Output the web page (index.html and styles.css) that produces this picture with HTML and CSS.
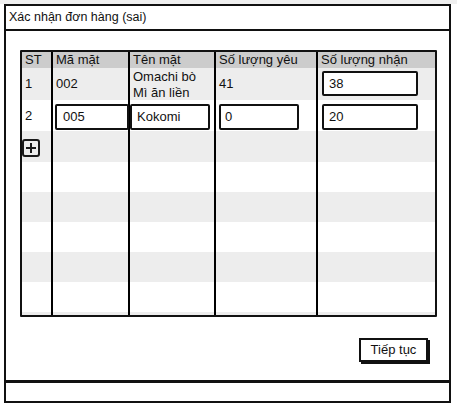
FILE: index.html
```html
<!DOCTYPE html>
<html lang="vi">
<head>
<meta charset="utf-8">
<title>Xác nhận đơn hàng (sai)</title>
<link rel="stylesheet" href="styles.css">
</head>
<body>
<div class="topstrip"></div>
<div class="window">
  <div class="titlebar">Xác nhận đơn hàng (sai)</div>
  <div class="content">
    <div class="table">
      <div class="row head">
        <div class="cell">ST</div>
        <div class="cell">Mã mặt</div>
        <div class="cell">Tên mặt</div>
        <div class="cell">Số lượng yêu</div>
        <div class="cell">Số lượng nhận</div>
      </div>
      <div class="row alt r1">
        <div class="cell mid">1</div>
        <div class="cell mid">002</div>
        <div class="cell"><div class="multi">Omachi bò<br>Mì ăn liền<br>Hảo hảo</div></div>
        <div class="cell mid">41</div>
        <div class="cell"><div class="input in-r1 in-wide">38</div></div>
      </div>
      <div class="row r2">
        <div class="cell mid">2</div>
        <div class="cell"><div class="input in-code">005</div></div>
        <div class="cell"><div class="input in-name">Kokomi</div></div>
        <div class="cell"><div class="input in-qty">0</div></div>
        <div class="cell"><div class="input in-wide">20</div></div>
      </div>
      <div class="row alt r3">
        <div class="cell"><span class="plus"></span></div>
        <div class="cell"></div><div class="cell"></div><div class="cell"></div><div class="cell"></div>
      </div>
      <div class="row r4">
        <div class="cell"></div><div class="cell"></div><div class="cell"></div><div class="cell"></div><div class="cell"></div>
      </div>
      <div class="row alt r4">
        <div class="cell"></div><div class="cell"></div><div class="cell"></div><div class="cell"></div><div class="cell"></div>
      </div>
      <div class="row r4">
        <div class="cell"></div><div class="cell"></div><div class="cell"></div><div class="cell"></div><div class="cell"></div>
      </div>
      <div class="row alt r4">
        <div class="cell"></div><div class="cell"></div><div class="cell"></div><div class="cell"></div><div class="cell"></div>
      </div>
      <div class="row r4">
        <div class="cell"></div><div class="cell"></div><div class="cell"></div><div class="cell"></div><div class="cell"></div>
      </div>
      <div class="row alt r4">
        <div class="cell"></div><div class="cell"></div><div class="cell"></div><div class="cell"></div><div class="cell"></div>
      </div>
    </div>
    <div class="actions">
      <div class="button">Tiếp tục</div>
    </div>
  </div>
  <div class="footer"></div>
</div>
</body>
</html>
```

FILE: styles.css
```css
* { box-sizing: border-box; }

html, body {
  margin: 0;
  padding: 0;
  background: #ffffff;
}

body {
  font-family: "Liberation Sans", Arial, sans-serif;
  font-size: 13px;
  color: #111;
  width: 457px;
  height: 406px;
  overflow: hidden;
}

.topstrip {
  height: 4px;
  background: #efefef;
}

.window {
  margin-left: 4px;
  width: 447px;
  height: 399px;
  border: 2px solid #111;
  display: flex;
  flex-direction: column;
}

.titlebar {
  height: 25px;
  border-bottom: 2px solid #111;
  padding: 4px 0 0 3px;
  line-height: 15px;
  font-size: 12.5px;
}

.content {
  flex: 1;
  padding: 19px 12px 0 14px;
  display: flex;
  flex-direction: column;
}

.table {
  height: 267px;
  border: 2px solid #111;
  overflow: hidden;
  border-radius: 1px;
}

.row {
  display: grid;
  grid-template-columns: 29px 77px 86px 102px 1fr;
  grid-template-rows: 100%;
}

.row .cell + .cell {
  border-left: 2px solid #000;
}

.cell {
  padding-left: 3px;
  position: relative;
  min-height: 0;
}

.head {
  height: 16px;
  background: #cccccc;
  line-height: 16px;
  font-size: 13px;
}

.alt { background: #ededed; }

.r1 { height: 32px; }
.r2 { height: 31px; }
.r3 { height: 31px; }
.r4 { height: 30px; }

.mid {
  display: flex;
  align-items: center;
  padding-bottom: 1px;
}

.multi {
  line-height: 16px;
  padding-top: 1px;
  white-space: nowrap;
  height: 36px;
  overflow: hidden;
  position: relative;
  z-index: 0;
}

.r2 {
  position: relative;
  z-index: 1;
  background: transparent;
}

.input {
  position: relative;
  z-index: 2;
  background: #fff;
  border: 2px solid #111;
  border-radius: 2px;
  height: 26px;
  line-height: 22px;
  padding-left: 5px;
  margin-top: 4px;
}

.in-r1 { margin-top: 3px; height: 25px; line-height: 21px; }
.in-wide { width: 96px; margin-left: 1px; }
.in-code { width: 74px; margin-left: -1px; padding-left: 6px; }
.in-name { width: 80px; margin-left: -3px; padding-left: 5px; }
.in-qty { width: 80px; margin-left: 0; padding-left: 4px; }

.plus {
  display: block;
  margin-top: 8px;
  margin-left: -3px;
  width: 18px;
  height: 18px;
  border: 2px solid #1a1a1a;
  border-radius: 3px;
  position: relative;
}

.plus::before,
.plus::after {
  content: "";
  position: absolute;
  background: #1a1a1a;
}

.plus::before {
  left: 2px;
  right: 2px;
  top: 6px;
  height: 2px;
}

.plus::after {
  top: 2px;
  bottom: 2px;
  left: 6px;
  width: 2px;
}

.actions {
  display: flex;
  justify-content: flex-end;
  padding-top: 21px;
  padding-right: 9px;
}

.button {
  width: 69px;
  height: 24px;
  border: 2px solid #111;
  background: #fff;
  box-shadow: 2px 2px 0 #111;
  text-align: center;
  line-height: 19px;
  font-size: 13px;
}

.footer {
  height: 21px;
  border-top: 3px solid #111;
}
```
